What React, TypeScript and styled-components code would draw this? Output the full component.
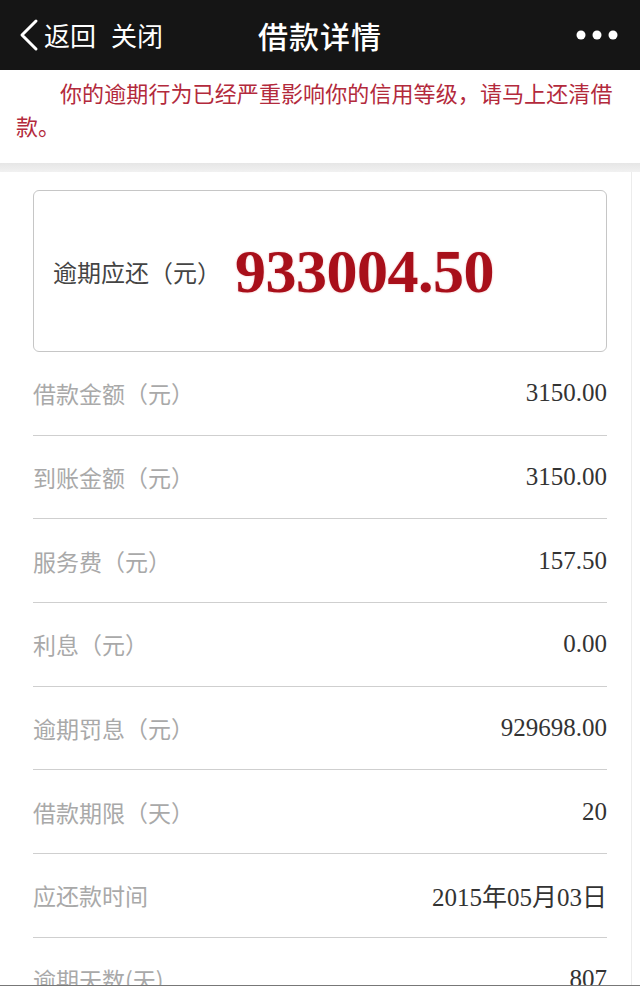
import styled, { createGlobalStyle } from 'styled-components';

const GlobalStyle = createGlobalStyle`
  html, body {
    margin: 0;
    padding: 0;
    overflow: hidden;
    background: #fff;
  }
  body {
    font-family: "Noto Sans CJK SC", "Noto Sans", sans-serif;
  }
`;

const Page = styled.div`
  position: relative;
  width: 640px;
  height: 997px;
  overflow: hidden;
  background: #fff;
`;

const Header = styled.header`
  height: 70px;
  background: #151515;
  display: grid;
  grid-template-columns: 1fr auto 1fr;
  align-items: center;
  color: #fff;
`;

const NavLeft = styled.div`
  display: flex;
  align-items: center;
  padding-left: 18px;
  font-size: 26px;
`;

const NavLink = styled.span<{ gap?: number }>`
  margin-left: ${(p) => p.gap || 0}px;
  line-height: 1;
`;

const Title = styled.h1`
  margin: 0;
  font-size: 30px;
  font-weight: 500;
  letter-spacing: 1px;
`;

const NavRight = styled.div`
  display: flex;
  justify-content: flex-end;
  padding-right: 22px;
`;

const Notice = styled.p`
  margin: 0;
  padding: 6px 14px 21px 16px;
  text-indent: 44px;
  font-size: 22px;
  line-height: 33px;
  letter-spacing: 0.1px;
  color: #b32a3c;
`;

const Band = styled.div`
  height: 9px;
  background: linear-gradient(#e6e6e6, #f1f1f1);
`;

const Content = styled.section`
  width: 632px;
  box-sizing: border-box;
  padding: 18px 24px 0 33px;
  border-right: 1px solid #ececec;
`;

const DueCard = styled.div`
  height: 162px;
  box-sizing: border-box;
  border: 1px solid #c6c6c6;
  border-radius: 6px;
  display: flex;
  align-items: center;
  padding-left: 19px;
  gap: 14px;
`;

const DueLabel = styled.span`
  font-size: 24px;
  color: #444;
`;

const DueAmount = styled.span`
  font-family: "Liberation Serif", "Times New Roman", serif;
  font-weight: bold;
  font-size: 62px;
  color: #a80f1a;
  text-shadow: 0 0 2px rgba(210, 30, 40, 0.35);
  letter-spacing: -0.5px;
`;

const Row = styled.div`
  height: 83.7px;
  box-sizing: border-box;
  display: flex;
  align-items: center;
  justify-content: space-between;
  border-bottom: 1.5px solid #cfcfcf;
`;

const RowLabel = styled.span`
  font-size: 23px;
  color: #a9a9a9;
`;

const RowValue = styled.span`
  font-family: "Liberation Serif", "Times New Roman", "Noto Sans CJK SC", serif;
  font-size: 25px;
  color: #333;
`;

const BottomBar = styled.div`
  position: absolute;
  left: 0;
  right: 0;
  bottom: 0;
  height: 11px;
  background: #fff;
  border-top: 1px solid #777;
`;

const rows: [string, string][] = [
  ['借款金额（元）', '3150.00'],
  ['到账金额（元）', '3150.00'],
  ['服务费（元）', '157.50'],
  ['利息（元）', '0.00'],
  ['逾期罚息（元）', '929698.00'],
  ['借款期限（天）', '20'],
  ['应还款时间', '2015年05月03日'],
  ['逾期天数(天)', '807'],
];

const BackIcon = () => (
  <svg width="22" height="34" viewBox="0 0 22 34">
    <path d="M18 3 L4 17 L18 31" fill="none" stroke="#fff" strokeWidth="3" strokeLinecap="round" strokeLinejoin="round" />
  </svg>
);

const MoreIcon = () => (
  <svg width="42" height="10" viewBox="0 0 42 10">
    <circle cx="5" cy="5" r="4.5" fill="#fff" />
    <circle cx="21" cy="5" r="4.5" fill="#fff" />
    <circle cx="37" cy="5" r="4.5" fill="#fff" />
  </svg>
);

export default function App() {
  return (
    <Page>
      <GlobalStyle />
      <Header>
        <NavLeft>
          <BackIcon />
          <NavLink gap={4}>返回</NavLink>
          <NavLink gap={15}>关闭</NavLink>
        </NavLeft>
        <Title>借款详情</Title>
        <NavRight>
          <MoreIcon />
        </NavRight>
      </Header>
      <Notice>你的逾期行为已经严重影响你的信用等级，请马上还清借款。</Notice>
      <Band />
      <Content>
        <DueCard>
          <DueLabel>逾期应还（元）</DueLabel>
          <DueAmount>933004.50</DueAmount>
        </DueCard>
        {rows.map(([label, value]) => (
          <Row key={label}>
            <RowLabel>{label}</RowLabel>
            <RowValue>{value}</RowValue>
          </Row>
        ))}
      </Content>
      <BottomBar />
    </Page>
  );
}
